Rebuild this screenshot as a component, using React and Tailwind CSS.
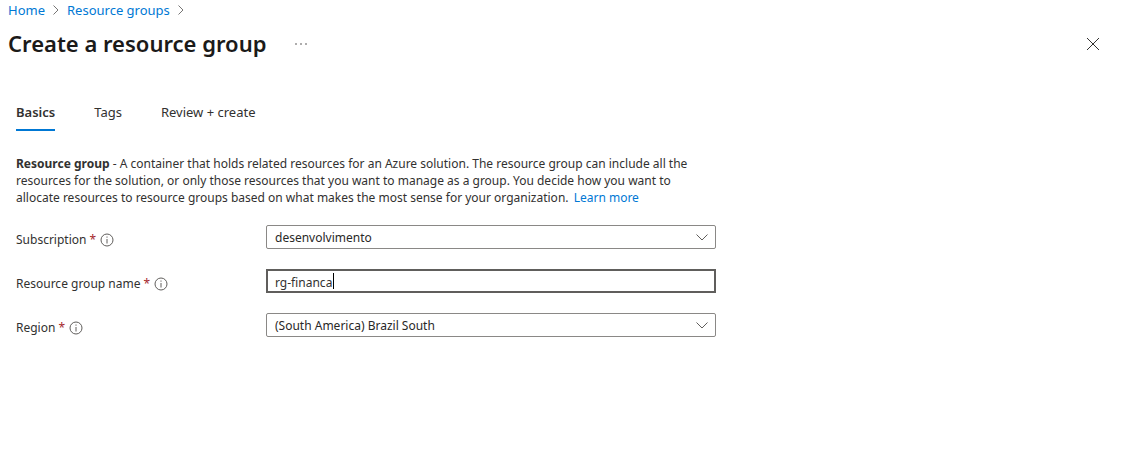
import React from "react";

const INFO_TEXT = "More information";

function Crumb({ children }) {
  return (
    <li className="flex items-center gap-2">
      <a href="#" className="text-[#0078d4]">{children}</a>
      <svg aria-hidden="true" viewBox="0 0 6 10" className="h-[10px] w-[6px]" fill="none" stroke="#767574">
        <path d="M0.5 0.5 5 5 0.5 9.5" />
      </svg>
    </li>
  );
}

function InfoIcon() {
  return (
    <svg role="img" aria-label={INFO_TEXT} viewBox="0 0 14 14" className="h-[14px] w-[14px] shrink-0" fill="none" stroke="#605e5c">
      <circle cx="7" cy="7" r="6" />
      <path d="M7 6v4.5" />
      <path d="M7 3.5v1.2" />
    </svg>
  );
}

function Field({ id, label, children }) {
  return (
    <div className="grid grid-cols-[250px_minmax(0,1fr)] items-start">
      <div className="flex items-center gap-1 pt-1.5 leading-[18px]">
        <label htmlFor={id}>
          {label} <span className="text-[#a4262c]">*</span>
        </label>
        <InfoIcon />
      </div>
      {children}
    </div>
  );
}

function Select({ id, value }) {
  return (
    <div className="relative">
      <select
        id={id}
        defaultValue={value}
        className="block h-6 w-full appearance-none rounded-xs border border-[#8a8886] bg-white pt-0.5 pr-8 pl-2 leading-5 text-[#292827] outline-none"
      >
        <option>{value}</option>
      </select>
      <svg aria-hidden="true" viewBox="0 0 12 7" className="pointer-events-none absolute top-[9px] right-2 h-[7px] w-3" fill="none" stroke="#605e5c">
        <path d="M0.5 0.5 6 6 11.5 0.5" />
      </svg>
    </div>
  );
}

export default function App() {
  return (
    <div className="bg-white font-['Noto_Sans','Open_Sans',sans-serif] text-xs text-[#323130]">
      <header className="pr-6 pl-2">
        <nav aria-label="Breadcrumb">
          <ol className="flex gap-2 text-[13px] leading-5">
            <Crumb>Home</Crumb>
            <Crumb>Resource groups</Crumb>
          </ol>
        </nav>
        <div className="flex items-center pt-2">
          <h1 className="pb-0.5 text-[22px] leading-[30px] font-semibold text-[#1b1a19]">Create a resource group</h1>
          <button type="button" aria-label="More actions" className="ml-[27px] p-0.5">
            <svg viewBox="0 0 12 4" className="h-1 w-3" fill="#484644">
              <circle cx="1" cy="2" r="0.8" />
              <circle cx="6" cy="2" r="0.8" />
              <circle cx="11" cy="2" r="0.8" />
            </svg>
          </button>
          <button type="button" aria-label="Close" className="ml-auto">
            <svg viewBox="0 0 12 12" className="h-3 w-3" fill="none" stroke="#323130">
              <path d="M0 0 12 12M12 0 0 12" />
            </svg>
          </button>
        </div>
      </header>

      <main className="px-4 pt-10">
        <div role="tablist" className="flex gap-[39px] text-[13px] leading-[25px]">
          <button type="button" role="tab" aria-selected="true" className="border-b-2 border-[#0078d4] pb-1 font-semibold">
            Basics
          </button>
          <button type="button" role="tab" aria-selected="false" className="border-b-2 border-transparent pb-1">
            Tags
          </button>
          <button type="button" role="tab" aria-selected="false" className="border-b-2 border-transparent pb-1">
            Review + create
          </button>
        </div>

        <form className="max-w-[700px] pt-6">
          <p className="leading-[17px]">
            <strong className="font-bold">Resource group</strong> - A container that holds related resources for an Azure
            solution. The resource group can include all the resources for the solution, or only those resources that you
            want to manage as a group. You decide how you want to allocate resources to resource groups based on what makes
            the most sense for your organization.{" "}
            <a href="#" className="ml-0.5 text-[#0078d4]">Learn more</a>
          </p>

          <div className="flex flex-col gap-5 pt-[19px]">
            <Field id="subscription" label="Subscription">
              <Select id="subscription" value="desenvolvimento" />
            </Field>
            <Field id="name" label="Resource group name">
              <div className="relative">
                <input
                  id="name"
                  defaultValue="rg-financa"
                  className="block h-6 w-full border-2 border-[#605e5c] bg-white px-[7px] pt-0.5 leading-[18px] caret-transparent outline-none"
                />
                <span aria-hidden="true" className="absolute top-1 left-[67px] h-4 w-px bg-black" />
              </div>
            </Field>
            <Field id="region" label="Region">
              <Select id="region" value="(South America) Brazil South" />
            </Field>
          </div>
        </form>
      </main>
    </div>
  );
}
